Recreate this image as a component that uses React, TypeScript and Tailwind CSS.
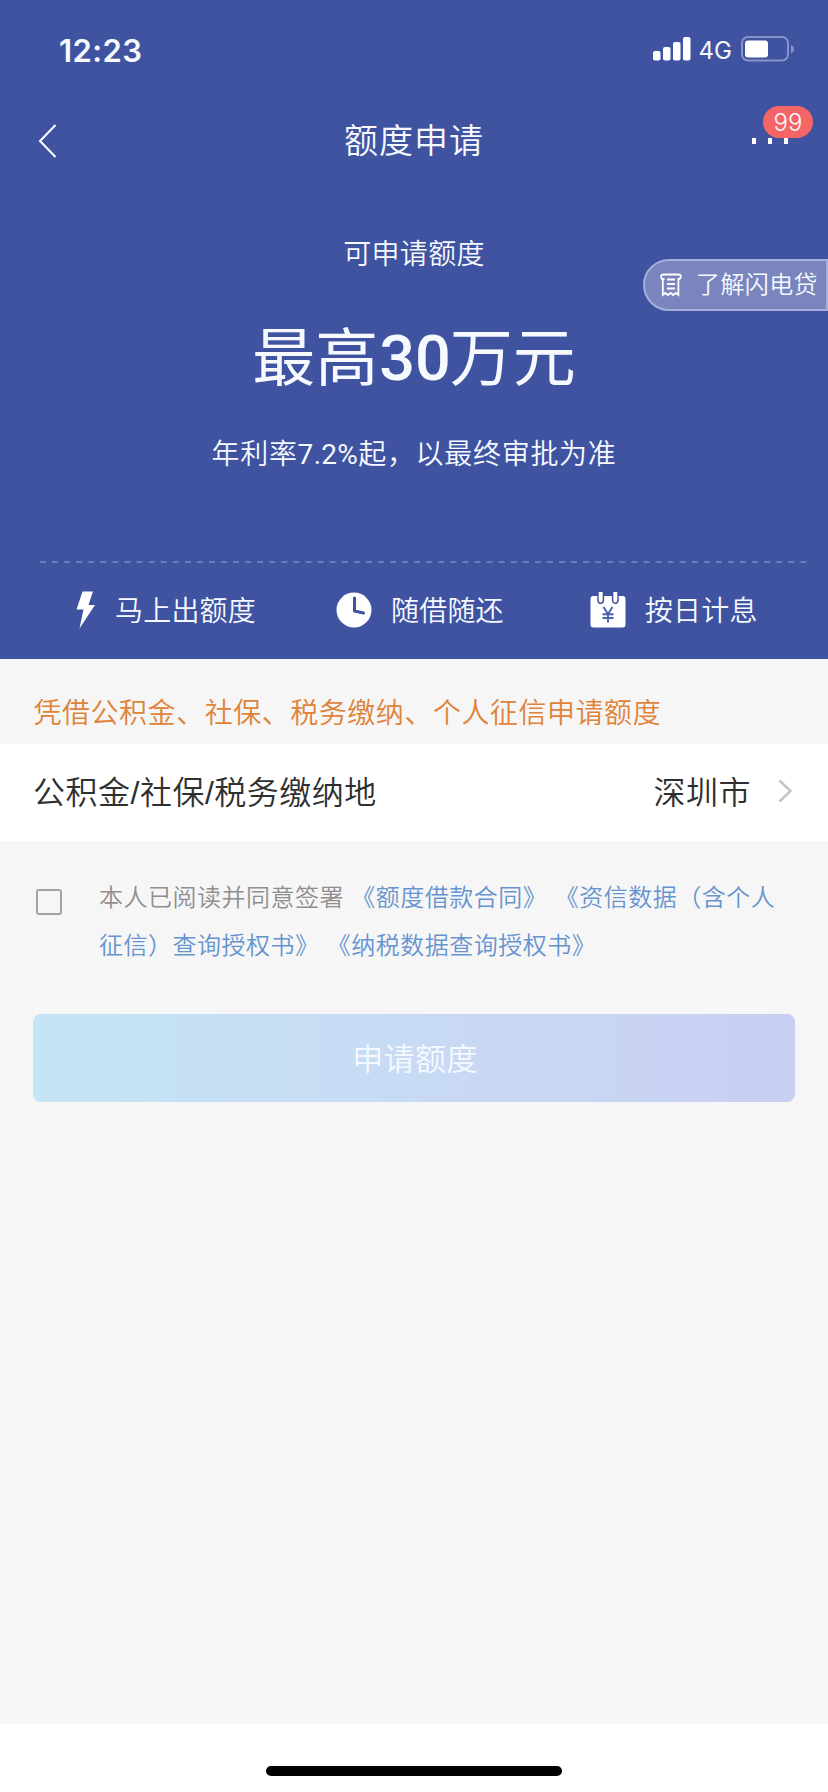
import type { ReactNode } from 'react';

function SignalIcon() {
  return (
    <svg width="38" height="24" viewBox="0 0 38 24" fill="white">
      <rect x="0" y="14" width="7.5" height="9.5" rx="2" />
      <rect x="10" y="10" width="7.5" height="13.5" rx="2" />
      <rect x="20" y="5" width="7.5" height="18.5" rx="2" />
      <rect x="30" y="0" width="7.5" height="23.5" rx="2" />
    </svg>
  );
}

function BatteryIcon() {
  return (
    <svg width="54" height="26" viewBox="0 0 54 26" fill="none">
      <rect x="1" y="1" width="46" height="23.5" rx="6" stroke="#8793cb" strokeWidth="2" />
      <rect x="4" y="4.5" width="23" height="17" rx="3" fill="white" />
      <path d="M50 9c4 1.6 4 6.6 0 8.2z" fill="#8793cb" />
    </svg>
  );
}

function ReceiptIcon() {
  return (
    <svg width="22" height="24" viewBox="0 0 22 24" fill="none" stroke="white" strokeWidth="1.8">
      <path d="M4.5 6H2.5Q1.200 6 1.200 4.500V3Q1.200 1.500 3 1.500H18.500Q20.800 1.500 20.800 3.500Q20.800 6 18.500 6" />
      <path d="M2.800 6v16l2.500-2 2.700 2 2.600-2 2.600 2 2.600-2 2.600 2V5" />
      <path d="M7 6.500h8M7 11h8M7 15.500h8" />
    </svg>
  );
}

function BoltIcon() {
  return (
    <svg width="20" height="38" viewBox="0 0 20 38" fill="white">
      <path d="M6.500 0.500H17L12.500 14H19L3.500 37.500L7.500 18.500H0.500z" />
    </svg>
  );
}

function ClockIcon() {
  return (
    <svg width="36" height="36" viewBox="0 0 36 36" fill="none">
      <circle cx="18" cy="18" r="17.5" fill="white" />
      <path d="M18.500 6v13l9 2" stroke="#4153a0" strokeWidth="3" strokeLinecap="round" strokeLinejoin="round" />
    </svg>
  );
}

function CalendarIcon() {
  return (
    <svg width="36" height="36" viewBox="0 0 36 36" fill="none">
      <rect x="0.5" y="4" width="35" height="31.5" rx="3" fill="white" />
      <path d="M8 0v8.500a2.700 2.700 0 0 0 5.400 0V0M22.600 0v8.500a2.700 2.700 0 0 0 5.400 0V0" fill="white" stroke="#4153a0" strokeWidth="1.5" />
      <path d="M13.500 15l4.500 7 4.500-7M18 22v8.500M12.500 22.300h11M12.500 26h11" stroke="#4a5fae" strokeWidth="1.9" />
    </svg>
  );
}

function Feature({ icon, label }: { icon: ReactNode; label: string }) {
  return (
    <div className="flex items-center gap-[19px]">
      {icon}
      <span className="pt-[3px] text-[28px] leading-9 tracking-[0.2px]">{label}</span>
    </div>
  );
}

export default function App() {
  return (
    <div className="flex h-[1792px] w-[828px] flex-col overflow-hidden bg-[#f6f6f6] font-[Roboto,'Noto_Sans_CJK_SC',sans-serif] font-[350] whitespace-nowrap">
      <header className="h-[659px] bg-[#3f53a1] text-[#f6faff]">
        {/* Status bar */}
        <div className="flex h-[98px] items-center pr-[33px] pl-[59px]">
          <span className="flex-1 pt-0.5 font-[Inter,sans-serif] text-[31px] leading-none font-semibold tracking-[0.4px]">12:23</span>
          <SignalIcon />
          <span className="mr-[9px] ml-2 pt-1 font-[Inter,sans-serif] text-2xl leading-none font-normal">4G</span>
          <BatteryIcon />
        </div>

        {/* Nav bar */}
        <div className="grid h-[86px] grid-cols-3 items-center pr-10 pl-[38px]">
          <svg width="20" height="34" viewBox="0 0 20 34" fill="none" stroke="white" strokeWidth="2">
            <path d="M17.500 1L2 17l15.500 16" />
          </svg>
          <h1 className="pl-0.5 text-center text-[34px] leading-none tracking-[1px]">额度申请</h1>
          <div className="relative flex justify-end gap-3">
            <i className="h-1.5 w-1 bg-white" />
            <i className="h-1.5 w-1 bg-white" />
            <i className="h-1.5 w-1 bg-white" />
            <span className="absolute -top-8 -right-[25px] flex h-8 w-[50px] items-center justify-center rounded-full bg-[#f56565] pt-0.5 font-[Inter,sans-serif] text-2xl leading-none font-light">
              99
            </span>
          </div>
        </div>

        {/* Available amount */}
        <div className="relative h-[377px] pt-[53px] text-center">
          <p className="text-[28px] leading-9 tracking-[0.3px]">可申请额度</p>
          <p className="mt-12 text-[63px] leading-[76px] font-normal">
            最高<span className="mr-[-1px] ml-px font-medium">30</span>万元
          </p>
          <p className="mt-10 text-[28px] leading-9 tracking-[0.7px]">
            年利率<span className="font-normal tracking-[0.3px]">7.2%</span>起，以最终审批为准
          </p>
          <button className="absolute top-[75px] right-0 flex h-[52px] w-[185px] items-center rounded-l-full border-2 border-[#a5afdd] bg-[#7b85bd] pl-[15px]">
            <ReceiptIcon />
            <span className="ml-3.5 text-2xl leading-none tracking-[0.4px]">了解闪电贷</span>
          </button>
        </div>

        {/* Dashed divider */}
        <svg className="ml-10 block" width="768" height="2">
          <path d="M0 1h768" stroke="#6d7dbb" strokeWidth="2" strokeDasharray="6 6.07" />
        </svg>

        <div className="flex h-[94px] items-center pl-[76px]">
          <Feature icon={<BoltIcon />} label="马上出额度" />
          <div className="ml-[80px]">
            <Feature icon={<ClockIcon />} label="随借随还" />
          </div>
          <div className="ml-[86px]">
            <Feature icon={<CalendarIcon />} label="按日计息" />
          </div>
        </div>
      </header>

      <div className="flex h-[85px] items-center pt-6 pl-[33.5px] text-[28px] tracking-[0.53px] text-[#e08338]">
        凭借公积金、社保、税务缴纳、个人征信申请额度
      </div>

      <div className="flex h-[97px] items-center bg-white pr-[35px] pl-[33px] font-['Liberation_Sans','Noto_Sans_CJK_SC',sans-serif] text-[32px] leading-none tracking-[0.5px] text-[#2f2f2f]">
        <span className="flex-1">公积金/社保/税务缴纳地</span>
        <span>深圳市</span>
        <svg className="-mt-1 ml-[27px]" width="15" height="24" viewBox="0 0 15 24" fill="none" stroke="#c4c4c4" strokeWidth="2.5">
          <path d="M1.500 1.500L12.500 12L1.500 22.500" />
        </svg>
      </div>

      <div className="flex pt-[33px] pl-9">
        <span className="mt-[15px] h-[26px] w-[26px] shrink-0 rounded-[3px] border-2 border-[#a3a3a3]" />
        <p className="ml-[37px] text-2xl leading-[48px] tracking-[0.5px] text-[#8e8e8e] [word-spacing:1px]">
          本人已阅读并同意签署 <span className="text-[#6694cf]">《额度借款合同》 《资信数据（含个人</span>
          <br />
          <span className="text-[#6694cf]">征信）查询授权书》 《纳税数据查询授权书》</span>
        </p>
      </div>

      <button className="mx-[33px] mt-11 h-[88px] rounded-lg bg-linear-to-r from-[#c4e5f5] via-[#c8daf4] to-[#c9cff2] pt-0.5 pl-0.5 text-[31px] leading-none tracking-[0.4px] text-[#f4faff]">
        申请额度
      </button>

      {/* Home indicator */}
      <footer className="mt-auto flex h-[68px] justify-center bg-white pt-[42px]">
        <div className="h-2.5 w-[296px] rounded-full bg-black" />
      </footer>
    </div>
  );
}
